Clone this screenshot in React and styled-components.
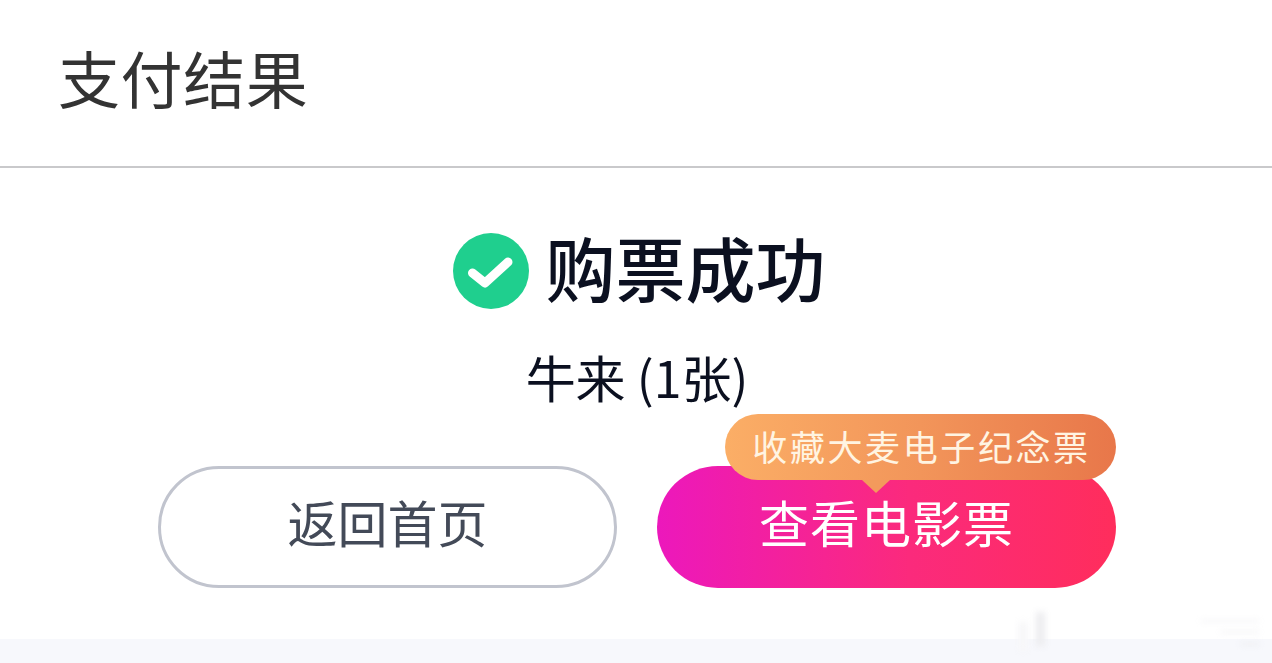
import React from 'react';
import styled, { createGlobalStyle } from 'styled-components';

const GlobalStyle = createGlobalStyle`
  html, body {
    margin: 0;
    padding: 0;
    background: #fff;
    font-family: "Noto Sans CJK SC", "Noto Sans", sans-serif;
  }
  * {
    box-sizing: border-box;
  }
`;

const Page = styled.div`
  position: relative;
  width: 1272px;
  height: 663px;
  display: flex;
  flex-direction: column;
  overflow: hidden;
  background: #fff;
`;

const Header = styled.header`
  height: 168px;
  flex: none;
  display: flex;
  align-items: center;
  padding: 0 0 12px 58px;
  border-bottom: 2px solid #c9c9cb;
`;

const Title = styled.h1`
  margin: 0;
  font-size: 62px;
  line-height: 1;
  font-weight: 400;
  letter-spacing: 0.6px;
  color: #333;
`;

const Main = styled.main`
  flex: 1;
  display: flex;
  flex-direction: column;
`;

const Status = styled.div`
  display: flex;
  align-items: center;
  justify-content: center;
  gap: 17px;
  margin-top: 63px;
  padding-left: 6px;
  height: 80px;
`;

const StatusText = styled.span`
  font-size: 70px;
  line-height: 1;
  font-weight: 500;
  padding-bottom: 8px;
  color: #0b1020;
`;

const Movie = styled.div`
  margin-top: 35px;
  text-align: center;
  font-size: 50px;
  line-height: 60px;
  padding-left: 2px;
  color: #0b1020;
`;

const Actions = styled.div`
  display: flex;
  gap: 40px;
  margin-top: 60px;
  padding-left: 158px;
`;

const Button = styled.button`
  position: relative;
  width: 459px;
  height: 122px;
  padding: 0 0 12px;
  border-radius: 61px;
  border: ${({ $primary }) => ($primary ? 'none' : '3px solid #c1c4ce')};
  background: ${({ $primary }) =>
    $primary ? 'linear-gradient(90deg, #ec18bc 0%, #fb2a7c 55%, #ff2d5c 100%)' : '#fff'};
  color: ${({ $primary }) => ($primary ? '#fff' : '#434a58')};
  font-family: inherit;
  font-size: 50px;
  line-height: 1;
  font-weight: 400;
  letter-spacing: ${({ $primary }) => ($primary ? '1px' : '0')};
`;

const Tip = styled.div`
  position: absolute;
  top: -52px;
  right: 0;
  width: 391px;
  height: 66px;
  display: flex;
  align-items: center;
  justify-content: center;
  padding: 0 0 3px 2px;
  border-radius: 33px;
  background: linear-gradient(90deg, #fbae66 0%, #f2955a 50%, #e8774a 100%);
  color: #fff4e2;
  font-size: 35px;
  letter-spacing: 2.6px;
  white-space: nowrap;

  &::after {
    content: '';
    position: absolute;
    left: 137px;
    bottom: -13px;
    border-left: 14px solid transparent;
    border-right: 14px solid transparent;
    border-top: 13px solid #f39a5c;
  }
`;

const FooterBand = styled.div`
  height: 24px;
  flex: none;
  background: #f7f8fc;
`;

// faint blurred watermark sitting over the bottom right corner
const Smudge = styled.div`
  position: absolute;
  left: ${({ $x }) => $x}px;
  top: ${({ $y }) => $y}px;
  width: ${({ $w }) => $w}px;
  height: ${({ $h }) => $h}px;
  background: ${({ $c }) => $c};
  filter: blur(3px);
`;

const CheckIcon = () => (
  <svg width="76" height="76" viewBox="0 0 76 76" aria-hidden="true">
    <circle cx="38" cy="38" r="38" fill="#1fcf8e" />
    <path
      d="M19.5 40 L32 50 L55 29"
      fill="none"
      stroke="#fff"
      strokeWidth="9"
      strokeLinecap="round"
      strokeLinejoin="round"
    />
  </svg>
);

const App = () => (
  <Page>
    <GlobalStyle />
    <Header>
      <Title>支付结果</Title>
    </Header>
    <Main>
      <Status>
        <CheckIcon />
        <StatusText>购票成功</StatusText>
      </Status>
      <Movie>牛来 (1张)</Movie>
      <Actions>
        <Button>返回首页</Button>
        <Button $primary>
          查看电影票
          <Tip>收藏大麦电子纪念票</Tip>
        </Button>
      </Actions>
    </Main>
    <FooterBand />
    <Smudge $x={1036} $y={612} $w={9} $h={34} $c="#ececef" />
    <Smudge $x={1018} $y={622} $w={10} $h={28} $c="#f7f7f9" />
    <Smudge $x={1200} $y={620} $w={60} $h={2} $c="#f1f1f4" />
    <Smudge $x={1220} $y={631} $w={40} $h={2} $c="#eeeef1" />
    <Smudge $x={1240} $y={643} $w={20} $h={2} $c="#e9e9ed" />
  </Page>
);

export default App;
